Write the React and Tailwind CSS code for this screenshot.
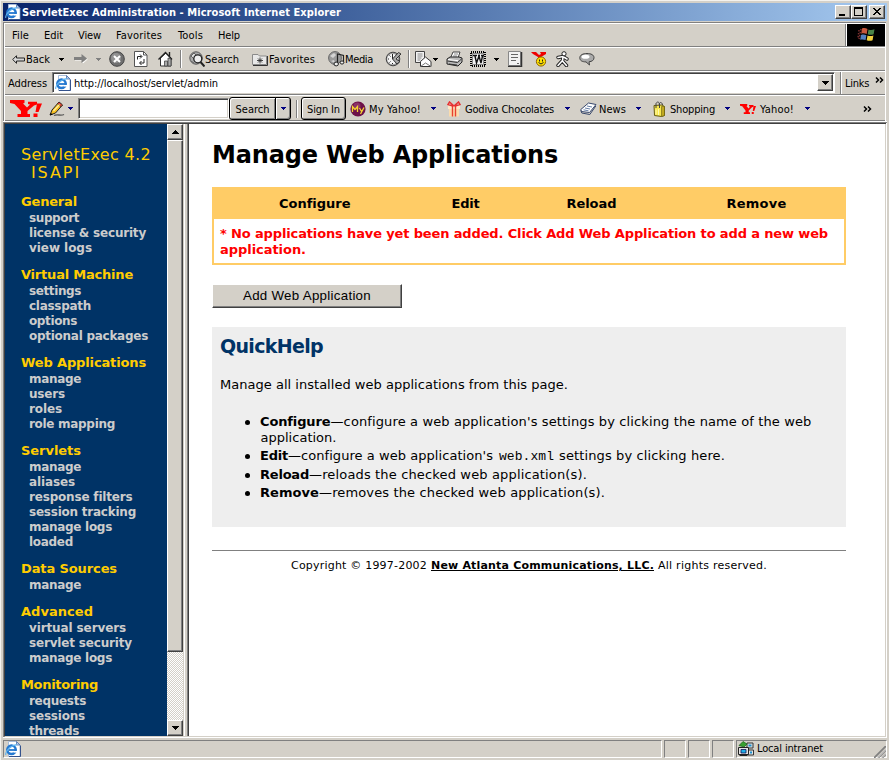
import React, { useLayoutEffect, useRef, useState } from "react";

const TAHOMA = "font-['DejaVu_Sans_Condensed','DejaVu_Sans',sans-serif]";
const VERDANA = "font-['DejaVu_Sans',Verdana,sans-serif]";

/* A run of text tracked so that it spans exactly `w` pixels. */
function Fit({ w, className = "", children }) {
  const ref = useRef(null);
  const [spacing, setSpacing] = useState(0);
  useLayoutEffect(() => {
    const el = ref.current;
    el.style.letterSpacing = "0px";
    const natural = el.getBoundingClientRect().width;
    const next = (w - natural) / Math.max(1, children.length);
    el.style.letterSpacing = next + "px";
    setSpacing(next);
  }, [w, children]);
  return (
    <span ref={ref} className={"inline-block shrink-0 whitespace-pre " + className} style={{ letterSpacing: spacing }}>
      {children}
    </span>
  );
}

function Svg({ w = 16, h = 16, className = "", crisp = false, children }) {
  return (
    <svg width={w} height={h} viewBox={`0 0 ${w} ${h}`} className={"block shrink-0 " + className} shapeRendering={crisp ? "crispEdges" : "auto"} fill="none">
      {children}
    </svg>
  );
}

function Caret({ className = "", color = "#000" }) {
  return (
    <Svg w={5} h={3} crisp className={className}>
      <path d="M0 0h5v1h-1v1h-1v1h-1v-1h-1v-1h-1z" fill={color} />
    </Svg>
  );
}

function Chevrons({ className = "" }) {
  return (
    <Svg w={9} h={6} className={className}>
      <path d="M1 .5l2.500 2.500L1 5.500M5 .5l2.500 2.500L5 5.500" stroke="#000" strokeWidth="1.500" />
    </Svg>
  );
}

function IEIcon({ className = "" }) {
  return (
    <Svg className={className}>
      <path d="M3.500.500h8l3.500 3.500v11.500h-11.500z" fill="#fff" stroke="#a8bcd8" />
      <path d="M11.500.500v3.500h3.500z" fill="#b8d0f0" stroke="#4a6ea8" strokeWidth=".8" />
      <path d="M15.500 4.500v11H4" stroke="#34528c" />
      <circle cx="6.500" cy="8.800" r="4.200" stroke="#2478d0" strokeWidth="2.500" />
      <path d="M4 9h7.500" stroke="#2478d0" strokeWidth="1.800" />
      <path d="M8.500 10h4v1.600h-4z" fill="#fff" />
      <path d="M.8 13.800C0 10.500 5 4.500 12 3.600" stroke="#5db4f0" strokeWidth="1.200" />
    </Svg>
  );
}

function YahooMark({ w, h, className = "" }) {
  return (
    <svg width={w} height={h} viewBox="0 0 32 17" preserveAspectRatio="none" className={"block shrink-0 " + className}>
      <path d="M0 0h14.500v3l-1.500.5 4 4 3-3-2-.5V1.800h9v2.700l-3 1-6.500 5.500v3h2.500v3H7.500v-3H11v-3L4.500 4 0 3z" fill="#f00" />
      <path d="M27 3.500h5L28.500 12H25.500zM23.500 13.500h4V17h-4z" fill="#f00" />
    </svg>
  );
}

const raised = "border border-t-white border-l-white border-r-[#404040] border-b-[#404040] bg-[#d4d0c8] shadow-[inset_-1px_-1px_0_#808080]";

function CaptionButton({ className = "", children }) {
  return <div className={"h-[14px] w-4 shrink-0 " + raised + " " + className}>{children}</div>;
}

function TitleBar() {
  return (
    <div className={"flex h-[18px] items-center bg-linear-to-r from-[#0a246a] to-[#a6caf0] pl-[2px] pr-[2px] " + TAHOMA}>
      <IEIcon />
      <Fit w={319} className="ml-px pt-px text-[11px] font-bold leading-[18px] text-white">
        ServletExec Administration - Microsoft Internet Explorer
      </Fit>
      <div className="ml-auto flex">
        <CaptionButton>
          <Svg w={14} h={12} crisp><path d="M3 8h6v2H3z" fill="#000" /></Svg>
        </CaptionButton>
        <CaptionButton>
          <Svg w={14} h={12} crisp><path d="M2 1h9v9H2zM3 3v6h7V3z" fill="#000" fillRule="evenodd" /></Svg>
        </CaptionButton>
        <CaptionButton className="ml-[2px]">
          <Svg w={14} h={12} crisp>
            <path d="M3 2h2v1h1v1h2V3h1V2h2v1h-1v1H9v1H8v1h1v1h1v1h1v1H9V8H8V7H6v1H5v1H3V8h1V7h1V6h1V5H5V4H4V3H3z" fill="#000" />
          </Svg>
        </CaptionButton>
      </div>
    </div>
  );
}

function MenuBar() {
  return (
    <div className="flex h-[23px] border-b border-[#808080]">
      <div className="flex h-[22px] grow items-center border-r border-[#808080] pl-[7px] text-[11px] leading-[22px] [&>span]:pt-[2px]">
        <Fit w={17}>File</Fit>
        <Fit w={19} className="ml-[15px]">Edit</Fit>
        <Fit w={23} className="ml-[15px]">View</Fit>
        <Fit w={46} className="ml-[15px]">Favorites</Fit>
        <Fit w={25} className="ml-[16px]">Tools</Fit>
        <Fit w={22} className="ml-[15px]">Help</Fit>
      </div>
      <div className="h-[22px] w-[39px] border-l border-white bg-black">
        <Svg w={38} h={22}>
          <path d="M12 6l-1 8M14 5l-2 10" stroke="#7a3030" strokeDasharray="1.500 1.500" strokeWidth="1.500" />
          <path d="M15 4.500c2-.8 4-.3 5.500.5l-.8 5c-2-.9-3.800-1-5.500-.3z" fill="#c8583c" />
          <path d="M21.500 5.500c2 .8 4 .6 6-.3l-.9 5c-2 .8-4 .8-5.900 0z" fill="#4a8448" />
          <path d="M14 11c2-.7 3.700-.5 5.400.3l-.8 4.800c-2-.8-3.600-.9-5.400-.3z" fill="#5480c0" />
          <path d="M20.500 11.500c2 .8 4 .7 5.900 0l-.8 4.700c-2 .9-4 .7-5.900 0z" fill="#f0d040" />
        </Svg>
      </div>
    </div>
  );
}

const Divider = ({ className = "" }) => <div className={"h-[18px] w-[2px] shrink-0 border-l border-r border-l-[#808080] border-r-white " + className} />;

function ButtonBar() {
  return (
    <div className="flex h-[24px] items-center border-b border-t border-b-[#808080] border-t-white pl-[7px] text-[11px] leading-[22px] [&>span]:pt-[2px]">
      <Svg w={13} h={9}>
        <path d="M.7 4.500L4.500.7v2.300h8v3h-8v2.300z" fill="#d8d8d8" stroke="#222" />
      </Svg>
      <Fit w={24} className="ml-px">Back</Fit>
      <Caret className="ml-[9px]" />
      <Svg w={14} h={10} className="ml-[10px]">
        <path d="M1 6h8v3l4.500-4" stroke="#fff" />
        <path d="M0 3h7.500V0L13 4.500 7.500 9V6H0z" fill="#808080" />
      </Svg>
      <Caret className="ml-[8px]" color="#808080" />
      <Svg w={16} h={16} className="ml-[8px]">
        <circle cx="8" cy="8" r="7.300" fill="#707070" stroke="#444" />
        <circle cx="7" cy="7" r="5" fill="#929292" />
        <path d="M5 5l6 6M11 5l-6 6" stroke="#fff" strokeWidth="2" />
      </Svg>
      <Svg w={14} h={16} className="ml-[9px]">
        <path d="M.5.500h9l3.500 3.500v11.500H.5z" fill="#fff" stroke="#555" />
        <path d="M9.500.500V4H13" stroke="#555" />
        <path d="M3.500 8.500V5.500h4M6 3.500l2 2-2 2M10 8v4H6M7.500 10l-2 2 2 2" stroke="#222" />
      </Svg>
      <Svg w={15} h={16} className="ml-[10px]">
        <path d="M2.500 7v8h10.500V7L8 2z" fill="#fff" stroke="#333" />
        <path d="M.5 8.500L7.500 1.500l6.500 7M11.500 1v5" stroke="#222" strokeWidth="1.400" />
        <path d="M6.500 15v-5h3v5zM10 7v8h3V8z" fill="#aaa" stroke="#444" strokeWidth=".8" />
      </Svg>
      <Divider className="ml-[7px]" />
      <Svg w={16} h={16} className="ml-[7px]">
        <circle cx="7" cy="7" r="6.200" fill="#aaa" stroke="#555" />
        <path d="M2 5l3-3 2 2-2 4zM2 10l3 2" fill="#ddd" stroke="#666" />
        <circle cx="8.800" cy="7.800" r="4" fill="#eee" stroke="#222" strokeWidth="1.300" />
        <path d="M11.500 11l4 4.500" stroke="#222" strokeWidth="2" />
      </Svg>
      <Fit w={34}>Search</Fit>
      <Svg w={16} h={14} className="ml-[13px]">
        <path d="M.5 2.500v10h14v-8.500H7.500L6 2.500z" fill="#e8e8e8" stroke="#8a8a8a" />
        <path d="M15.500 4v9.500H1" stroke="#333" />
        <path d="M8 5.500v6M5 8.500h6M6 6.500l4 4M10 6.500l-4 4" stroke="#333" strokeWidth=".9" />
      </Svg>
      <Fit w={46} className="ml-px">Favorites</Fit>
      <Svg w={17} h={16} className="ml-[13px]">
        <circle cx="7" cy="7" r="6.400" fill="#9a9a9a" stroke="#666" />
        <path d="M2 5l4-3 2 2-3 3zM3 10l3-1 1 3z" fill="#d4d4d4" />
        <path d="M9.500 13V3l6 1.500V12" stroke="#222" strokeWidth="1.200" />
        <ellipse cx="8.200" cy="13" rx="2.200" ry="1.900" fill="#eee" stroke="#222" />
        <ellipse cx="14" cy="11.500" rx="1.800" ry="1.600" fill="#eee" stroke="#222" />
      </Svg>
      <Fit w={28}>Media</Fit>
      <Svg w={17} h={16} className="ml-[12px]">
        <circle cx="8" cy="8" r="6.800" fill="#999" stroke="#444" />
        <circle cx="7.500" cy="8" r="5.300" fill="#f4f4f4" />
        <path d="M7.500 8V3M3 8h1M7.500 12v1M4.500 4.500l1 1M4.500 11.500l1-1" stroke="#222" />
        <path d="M7.500 8L13.500 1.500l2.500 1.500-5 5 4 2.500-3 2.500z" fill="#a8a8a8" stroke="#333" />
      </Svg>
      <Divider className="ml-[6px]" />
      <Svg w={17} h={16} className="ml-[5px]">
        <path d="M.5.500h9v11h-9z" fill="#f2f2f2" stroke="#444" />
        <path d="M2.500 3h5M2.500 5h5M2.500 7h4M2.500 9h3" stroke="#888" />
        <path d="M5.500 10.500l5-4.500 5.500 4.500v5H5.500z" fill="#fff" stroke="#333" />
        <path d="M5.500 15.500l5-3.500 5.500 3.500" stroke="#777" />
      </Svg>
      <Caret className="ml-[1px]" />
      <Svg w={17} h={16} className="ml-[8px]">
        <path d="M4.500 7l2.500-6h7l-2 6" fill="#fff" stroke="#444" />
        <path d="M8 3h4M7 5h4" stroke="#888" />
        <path d="M1 8l3-2h9l3 1v4l-4 4-11-2z" fill="#bbb" stroke="#222" />
        <path d="M1.500 10l10 1.500L15.500 8M3 13l8 1" stroke="#333" />
        <path d="M2 8.500l10 1.200" stroke="#fff" />
      </Svg>
      <Svg w={17} h={16} className="ml-[7px]">
        <path d="M1 1h14v14H1z" fill="#d4d0c8" stroke="#000" strokeWidth="2" strokeDasharray="1 1" />
        <path d="M2.500 2.500h11v11h-11z" fill="#f2f2f2" stroke="#888" />
        <path d="M3 4.500h4M5 5l1.500 7L9 5l2 7 1.500-7M8 4.500h2M11 4.500h3" stroke="#111" strokeWidth="1.400" />
      </Svg>
      <Caret className="ml-[7px]" />
      <Svg w={15} h={16} className="ml-[9px]">
        <path d="M.5.500h12v14H.5z" fill="#f2f2f2" stroke="#888" />
        <path d="M13.500 1v14.500H0" stroke="#333" strokeWidth="1.500" />
        <path d="M3 3.500h7M3 6.500h7M3 9.500h5M9 12.500h2" stroke="#666" />
      </Svg>
      <Svg w={17} h={16} className="ml-[8px]">
        <path d="M0 1h5l3 3 2-1-1-2h6v2l-5 3v2H7V6L2 3z" fill="#e00" />
        <circle cx="10" cy="10.500" r="4.600" fill="#ffe100" stroke="#8a6000" />
        <path d="M8.500 8.500v2M11.500 8.500v2M7.500 11.500q2.500 3 5 0" stroke="#222" />
      </Svg>
      <Svg w={14} h={16} className="ml-[8px]">
        <path d="M7 6L6.500 10 10.500 14.500M6.500 9.500L2 14.500M2 6.500l5-1 4 2.500" stroke="#222" strokeWidth="3.400" strokeLinecap="round" />
        <path d="M7 6L6.500 10 10.500 14.500M6.500 9.500L2 14.500M2 6.500l5-1 4 2.500" stroke="#fff" strokeWidth="1.600" strokeLinecap="round" />
        <circle cx="8" cy="2.800" r="2.100" fill="#fff" stroke="#222" />
      </Svg>
      <Svg w={17} h={15} className="ml-[9px]">
        <path d="M8 1.500c4 0 7 1.400 7 4.200 0 2.500-2 3.800-5 4.100L10.500 13 7 9.900C3 9.900.8 8.500.8 5.800.8 3 4 1.500 8 1.500z" fill="#aaa" stroke="#444" />
        <ellipse cx="6.500" cy="4.800" rx="4" ry="2" fill="#fff" />
      </Svg>
    </div>
  );
}

function AddressBar() {
  return (
    <div className="flex h-[24px] border-b border-t border-b-[#808080] border-t-white text-[11px] leading-[23px]">
      <Fit w={39} className="ml-[3px]">Address</Fit>
      <div className="ml-[5px] flex h-[21px] w-[783px] items-center border border-b-white border-l-[#808080] border-r-white border-t-[#808080] bg-white pl-[2px] pr-[1px] shadow-[inset_1px_1px_0_#404040]">
        <IEIcon />
        <Fit w={144} className="ml-[3px] pt-px">http://localhost/servlet/admin</Fit>
        <div className={"ml-auto flex h-[17px] w-4 items-center justify-center " + raised}>
          <Svg w={7} h={4} crisp><path d="M0 0h7v1H6v1H5v1H4v1H3V3H2V2H1V1H0z" fill="#000" /></Svg>
        </div>
      </div>
      <div className="ml-[5px] w-[2px] border-l border-r border-l-[#808080] border-r-white" />
      <Fit w={24} className="ml-[3px]">Links</Fit>
      <Chevrons className="ml-[6px] mt-[5px]" />
    </div>
  );
}

function YahooBar() {
  const btn = "flex h-[23px] items-center justify-center border border-black bg-[#d4d0c8] shadow-[inset_1px_1px_0_#fff,inset_-1px_-1px_0_#808080]";
  return (
    <div className="flex h-[26px] items-center border-b border-t border-b-[#808080] border-t-white pl-[5px] pt-px text-[11px] leading-[23px] [&_span]:pt-px">
      <YahooMark w={32} h={17} />
      <Svg w={16} h={16} className="ml-[7px]">
        <path d="M5 14.500c4-2 6 1 10-1" stroke="#555" strokeWidth="1.300" />
        <path d="M1 14l2-5 7-8 3.500 3-7 8z" fill="#f8c020" stroke="#222" />
        <path d="M10 1l3.500 3-1.500 1.700L8.500 2.700z" fill="#e04838" stroke="#222" strokeWidth=".6" />
        <path d="M4.500 10l6-6.500" stroke="#fff2a0" strokeWidth="1.200" />
        <path d="M1 14.500l.8-2.500 2 1.500z" fill="#000" />
      </Svg>
      <Caret className="ml-[3px]" color="#000080" />
      <div className="ml-[5px] h-[21px] w-[151px] border border-b-white border-l-[#808080] border-r-white border-t-[#808080] bg-white shadow-[inset_1px_1px_0_#404040,inset_-1px_-1px_0_#d4d0c8]" />
      <div className={btn + " w-[47px] rounded-l-[3px]"}><Fit w={34}>Search</Fit></div>
      <div className={btn + " -ml-px w-[16px] rounded-r-[3px]"}><Caret color="#000080" /></div>
      <Divider className="ml-[5px]" />
      <div className={btn + " ml-[3px] w-[45px] rounded-[3px]"}><Fit w={33}>Sign In</Fit></div>
      <Svg w={16} h={16} className="ml-[4px]">
        <circle cx="8" cy="8" r="7.600" fill="#6d1048" />
        <circle cx="7" cy="5" r="3.500" fill="#8a3068" />
        <path d="M2.500 11V5.500l2.500 3 2.500-3V11M9.500 7l2 3.500M14 6.500l-3.500 6.500" stroke="#f4d430" strokeWidth="1.300" />
      </Svg>
      <Fit w={52} className="ml-[3px]">My Yahoo!</Fit>
      <Caret className="ml-[10px]" color="#000080" />
      <Svg w={14} h={16} className="ml-[11px]">
        <path d="M2 6h10v9.500H2z" fill="#fbdcae" />
        <path d="M1 4.500h12V8H1z" fill="#fde8c8" />
        <path d="M5.500 5v10.500M8.500 5v10.500" stroke="#e84030" strokeWidth="1.400" />
        <path d="M7 5L2.500 1 1 3.500l5 1.500M7 5l4.500-4L13 3.500 8 5" stroke="#e83030" strokeWidth="1.500" />
      </Svg>
      <Fit w={89} className="ml-[4px]">Godiva Chocolates</Fit>
      <Caret className="ml-[11px]" color="#000080" />
      <Svg w={17} h={14} className="ml-[10px]">
        <path d="M.8 7.500L8.500 1l7.500 1.500-6.500 8-8-1z" fill="#fff" stroke="#38486c" />
        <path d="M.8 8.500l1 2.500 8 1.500 6-8.500" stroke="#38486c" />
        <path d="M5 6l5 1M7 4l5 1M3.500 7.800l5 1" stroke="#6880a8" />
      </Svg>
      <Fit w={27} className="ml-[2px]">News</Fit>
      <Caret className="ml-[10px]" color="#000080" />
      <Svg w={13} h={16} className="ml-[12px]">
        <path d="M1 4.500l8-.5 2.500 1.500v9l-3 1-7-1z" fill="#f8e850" stroke="#665c10" />
        <path d="M8.500 5.500v10l3-1v-9z" fill="#c0a820" stroke="#665c10" strokeWidth=".6" />
        <path d="M3 7V2.500C4 .5 6 .5 6.500 3v4M6 3.500C7 .5 9 1 9.500 4" stroke="#444" />
        <path d="M3 8.500v5M5.500 8v6" stroke="#fffab0" />
      </Svg>
      <Fit w={45} className="ml-[4px]">Shopping</Fit>
      <Caret className="ml-[10px]" color="#000080" />
      <YahooMark w={16} h={10} className="ml-[10px]" />
      <Fit w={34} className="ml-[4px]">Yahoo!</Fit>
      <Caret className="ml-[11px]" color="#000080" />
      <Chevrons className="ml-[53px]" />
    </div>
  );
}

const NAV = [
  ["General", 56, [["support", 50], ["license & security", 117], ["view logs", 63]]],
  ["Virtual Machine", 112, [["settings", 52], ["classpath", 62], ["options", 48], ["optional packages", 119]]],
  ["Web Applications", 125, [["manage", 52], ["users", 36], ["roles", 33], ["role mapping", 86]]],
  ["Servlets", 60, [["manage", 52], ["aliases", 46], ["response filters", 103], ["session tracking", 107], ["manage logs", 83], ["loaded", 44]]],
  ["Data Sources", 96, [["manage", 52]]],
  ["Advanced", 72, [["virtual servers", 97], ["servlet security", 103], ["manage logs", 83]]],
  ["Monitoring", 77, [["requests", 57], ["sessions", 56], ["threads", 50]]],
];

function Sidebar() {
  return (
    <nav className={"h-[612px] w-[162px] shrink-0 overflow-hidden bg-[#003366] pl-4 pt-[22px] font-bold " + VERDANA}>
      <div className="flex flex-col text-[16px] font-normal leading-[18px] text-[#ffcc00]">
        <Fit w={130} className="self-start">ServletExec 4.2</Fit>
        <Fit w={50} className="ml-[10px] self-start">ISAPI</Fit>
      </div>
      <div className="mt-[12px] flex flex-col gap-[11px]">
        {NAV.map(([title, w, items]) => (
          <div key={title} className="flex flex-col items-start">
            <Fit w={w} className="mb-px text-[13px] leading-4 text-[#ffcc00]">{title}</Fit>
            {items.map(([label, iw]) => (
              <Fit key={label} w={iw} className="ml-2 text-[12px] leading-[15px] text-[#cccccc]">{label}</Fit>
            ))}
          </div>
        ))}
      </div>
    </nav>
  );
}

function ScrollButton({ up }) {
  return (
    <div className={"flex h-4 w-4 shrink-0 items-center justify-center " + raised}>
      <Svg w={7} h={4} crisp>
        <path d={up ? "M3 0h1v1h1v1h1v1h1v1H0V3h1V2h1V1h1z" : "M0 0h7v1H6v1H5v1H4v1H3V3H2V2H1V1H0z"} fill="#000" />
      </Svg>
    </div>
  );
}

function Scrollbar() {
  return (
    <div className="flex h-[612px] w-4 shrink-0 flex-col bg-[repeating-conic-gradient(#fff_0_25%,#d4d0c8_0_50%)] bg-[length:2px_2px]">
      <ScrollButton up />
      <div className={"h-[512px] w-4 " + raised} />
      <div className="grow" />
      <ScrollButton />
    </div>
  );
}

function HelpItem({ w, term, children }) {
  return (
    <li className="flex">
      <span className="ml-[25px] mt-[6px] mr-[10px] h-[5px] w-[5px] shrink-0 rounded-full bg-black" />
      <Fit w={w} className="font-bold">{term}</Fit>
      {children}
    </li>
  );
}

function Content() {
  return (
    <main className={"h-[612px] w-[696px] shrink-0 bg-white pl-[23px] text-[13px] leading-4 text-black " + VERDANA}>
      <h1 className="mt-[16px] flex h-[30px] text-[24px] font-bold leading-[30px]">
        <Fit w={346}>Manage Web Applications</Fit>
      </h1>
      <section className="mt-[17px] h-[78px] w-[634px] border-2 border-[#ffcc66]">
        <div className="flex h-[30px] items-center bg-[#ffcc66] pl-[65px] font-bold">
          <Fit w={71}>Configure</Fit>
          <Fit w={28} className="ml-[101px]">Edit</Fit>
          <Fit w={50} className="ml-[87px]">Reload</Fit>
          <Fit w={60} className="ml-[110px]">Remove</Fit>
        </div>
        <div className="flex flex-col items-start pl-[6px] pt-[7px] font-bold text-[#ff0000]">
          <Fit w={608}>* No applications have yet been added. Click Add Web Application to add a new web</Fit>
          <Fit w={86}>application.</Fit>
        </div>
      </section>
      <button className={"mt-[19px] flex h-[24px] w-[190px] items-center justify-center font-['Liberation_Sans',Arial,sans-serif] text-[13.300px] " + raised}>
        <Fit w={128}>Add Web Application</Fit>
      </button>
      <section className="mt-[19px] h-[200px] w-[634px] bg-[#eeeeee] pl-2 pt-[7px]">
        <h2 className="flex h-6 text-[19px] font-bold leading-6 text-[#003366]"><Fit w={103}>QuickHelp</Fit></h2>
        <p className="mt-[19px] flex"><Fit w={348}>Manage all installed web applications from this page.</Fit></p>
        <ul className="mt-[21px]">
          <HelpItem w={70} term="Configure">
            <span className="flex flex-col items-start">
              <Fit w={481}>—configure a web application's settings by clicking the name of the web</Fit>
              <Fit w={76} className="-ml-[70px]">application.</Fit>
            </span>
          </HelpItem>
          <div className="h-[2px]" />
          <HelpItem w={28} term="Edit">
            <Fit w={205}>—configure a web application's</Fit>
            <Fit w={55} className="ml-[6px] pt-px font-['Liberation_Mono','Courier_New',monospace] text-[13px] leading-[15px]">web.xml</Fit>
            <Fit w={166} className="ml-[5px]">settings by clicking here.</Fit>
          </HelpItem>
          <div className="h-[3px]" />
          <HelpItem w={49} term="Reload"><Fit w={278}>—reloads the checked web application(s).</Fit></HelpItem>
          <div className="h-[2px]" />
          <HelpItem w={59} term="Remove"><Fit w={286}>—removes the checked web application(s).</Fit></HelpItem>
        </ul>
      </section>
      <div className="mt-[23px] h-px w-[634px] bg-[#808080]" />
      <footer className="mt-[7px] flex pl-[79px] text-[11px]">
        <Fit w={136}>Copyright © 1997-2002</Fit>
        <Fit w={223} className="ml-[4px] font-bold underline">New Atlanta Communications, LLC.</Fit>
        <Fit w={109} className="ml-[4px]">All rights reserved.</Fit>
      </footer>
    </main>
  );
}

const panel = "h-[18px] shrink-0 border border-b-white border-l-[#808080] border-r-white border-t-[#808080]";

function StatusBar() {
  return (
    <div className="flex h-[18px] gap-[2px] text-[11px] leading-[16px]">
      <div className={panel + " flex w-[659px] items-center pl-[1px]"}><IEIcon /></div>
      <div className={panel + " w-[22px]"} />
      <div className={panel + " w-[22px]"} />
      <div className={panel + " w-[22px]"} />
      <div className={panel + " flex w-[151px] items-center pl-[1px]"}>
        <Svg w={17} h={16}>
          <path d="M9 2h6v5H9z" fill="#e4e4e4" stroke="#333" />
          <path d="M10.500 3.500h3v2h-3z" fill="#1890d0" />
          <path d="M10 9h5.500v5H10z" fill="#e4e4e4" stroke="#333" />
          <path d="M12 10.500h2v2h-2z" fill="#1890d0" />
          <path d="M.5 6.500h10v7H.5zM1.500 14.500h8" fill="#e4e4e4" stroke="#222" />
          <path d="M3 8.500h5v3.500H3z" fill="#20b0e8" stroke="#115" strokeWidth=".8" />
          <path d="M1 4.500L5 .5l4 2.500-3 3z" fill="#38a030" stroke="#186018" strokeWidth=".7" />
        </Svg>
        <Fit w={66} className="ml-[2px]">Local intranet</Fit>
        <Svg w={12} h={12} className="ml-auto mt-[5px]">
          <path d="M0 12L12 0M4 12l8-8M8 12l4-4" stroke="#808080" strokeWidth="1.800" />
          <path d="M2 13.500L13.500 2M6 13.500L13.500 6" stroke="#fff" strokeWidth=".8" />
        </Svg>
      </div>
    </div>
  );
}

export default function App() {
  return (
    <div className={"h-[760px] w-[889px] overflow-hidden border-l border-t border-[#f4f2ee] bg-[#d4d0c8] pl-[2px] pt-[2px] text-black " + TAHOMA}>
      <div className="w-[884px]">
        <TitleBar />
        <div className="mt-px h-[99px] w-[883px] border-l border-t border-[#808080]">
          <div className="h-[98px] border-l border-r border-t border-white">
            <MenuBar />
            <ButtonBar />
            <AddressBar />
            <YahooBar />
          </div>
        </div>
        <div className="h-px bg-white" />
        <div className="flex border-l border-t border-[#808080]">
          <div className="flex w-[882px] shrink-0 border-b border-l border-t border-b-[#d4d0c8] border-l-[#404040] border-t-[#404040]">
            <Sidebar />
            <Scrollbar />
            <div className="flex h-[612px] w-[6px] shrink-0">
              <div className="w-px bg-[#d4d0c8]" />
              <div className="w-px bg-white" />
              <div className="w-[2px] bg-[#d4d0c8]" />
              <div className="w-px bg-[#808080]" />
              <div className="w-px bg-[#404040]" />
            </div>
            <Content />
          </div>
          <div className="w-px shrink-0 bg-white" />
        </div>
        <div className="mb-[2px] h-px bg-white" />
        <StatusBar />
      </div>
    </div>
  );
}
